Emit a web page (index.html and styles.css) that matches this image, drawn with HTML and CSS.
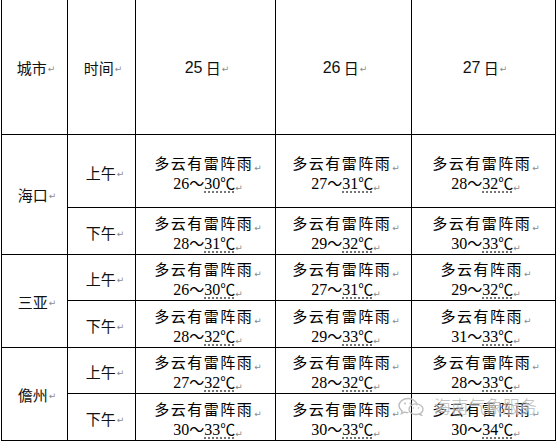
FILE: index.html
```html
<!DOCTYPE html>
<html lang="zh">
<head>
<meta charset="utf-8">
<title>天气预报</title>
<link rel="stylesheet" href="styles.css">
</head>
<body>
<div class="page">
  <div class="sheet">
    <div class="cell head">城市<span class="pm">↵</span></div>
    <div class="cell head">时间<span class="pm">↵</span></div>
    <div class="cell head"><span class="num">25</span>&nbsp;日<span class="pm">↵</span></div>
    <div class="cell head"><span class="num">26</span>&nbsp;日<span class="pm">↵</span></div>
    <div class="cell head"><span class="num">27</span>&nbsp;日<span class="pm">↵</span></div>

    <div class="cell city">海口<span class="pm">↵</span></div>
    <div class="cell time">上午<span class="pm">↵</span></div>
    <div class="cell data"><p class="w">多云有雷阵雨<span class="pm">↵</span></p><p class="t">26<span class="cj">～</span><span class="u">30<span class="cj">℃</span></span><span class="pm">↵</span></p></div>
    <div class="cell data"><p class="w">多云有雷阵雨<span class="pm">↵</span></p><p class="t">27<span class="cj">～</span><span class="u">31<span class="cj">℃</span></span><span class="pm">↵</span></p></div>
    <div class="cell data"><p class="w">多云有雷阵雨<span class="pm">↵</span></p><p class="t">28<span class="cj">～</span><span class="u">32<span class="cj">℃</span></span><span class="pm">↵</span></p></div>
    <div class="cell time">下午<span class="pm">↵</span></div>
    <div class="cell data"><p class="w">多云有雷阵雨<span class="pm">↵</span></p><p class="t">28<span class="cj">～</span><span class="u">31<span class="cj">℃</span></span><span class="pm">↵</span></p></div>
    <div class="cell data"><p class="w">多云有雷阵雨<span class="pm">↵</span></p><p class="t">29<span class="cj">～</span><span class="u">32<span class="cj">℃</span></span><span class="pm">↵</span></p></div>
    <div class="cell data"><p class="w">多云有雷阵雨<span class="pm">↵</span></p><p class="t">30<span class="cj">～</span><span class="u">33<span class="cj">℃</span></span><span class="pm">↵</span></p></div>

    <div class="cell city">三亚<span class="pm">↵</span></div>
    <div class="cell time">上午<span class="pm">↵</span></div>
    <div class="cell data"><p class="w">多云有雷阵雨<span class="pm">↵</span></p><p class="t">26<span class="cj">～</span><span class="u">30<span class="cj">℃</span></span><span class="pm">↵</span></p></div>
    <div class="cell data"><p class="w">多云有雷阵雨<span class="pm">↵</span></p><p class="t">27<span class="cj">～</span><span class="u">31<span class="cj">℃</span></span><span class="pm">↵</span></p></div>
    <div class="cell data"><p class="w">多云有阵雨<span class="pm">↵</span></p><p class="t">29<span class="cj">～</span><span class="u">32<span class="cj">℃</span></span><span class="pm">↵</span></p></div>
    <div class="cell time">下午<span class="pm">↵</span></div>
    <div class="cell data"><p class="w">多云有雷阵雨<span class="pm">↵</span></p><p class="t">28<span class="cj">～</span><span class="u">32<span class="cj">℃</span></span><span class="pm">↵</span></p></div>
    <div class="cell data"><p class="w">多云有雷阵雨<span class="pm">↵</span></p><p class="t">29<span class="cj">～</span><span class="u">33<span class="cj">℃</span></span><span class="pm">↵</span></p></div>
    <div class="cell data"><p class="w">多云有阵雨<span class="pm">↵</span></p><p class="t">31<span class="cj">～</span><span class="u">33<span class="cj">℃</span></span><span class="pm">↵</span></p></div>

    <div class="cell city">儋州<span class="pm">↵</span></div>
    <div class="cell time">上午<span class="pm">↵</span></div>
    <div class="cell data"><p class="w">多云有雷阵雨<span class="pm">↵</span></p><p class="t">27<span class="cj">～</span><span class="u">32<span class="cj">℃</span></span><span class="pm">↵</span></p></div>
    <div class="cell data"><p class="w">多云有雷阵雨<span class="pm">↵</span></p><p class="t">28<span class="cj">～</span><span class="u">32<span class="cj">℃</span></span><span class="pm">↵</span></p></div>
    <div class="cell data"><p class="w">多云有雷阵雨<span class="pm">↵</span></p><p class="t">28<span class="cj">～</span><span class="u">33<span class="cj">℃</span></span><span class="pm">↵</span></p></div>
    <div class="cell time">下午<span class="pm">↵</span></div>
    <div class="cell data"><p class="w">多云有雷阵雨<span class="pm">↵</span></p><p class="t">30<span class="cj">～</span><span class="u">33<span class="cj">℃</span></span><span class="pm">↵</span></p></div>
    <div class="cell data"><p class="w">多云有雷阵雨<span class="pm">↵</span></p><p class="t">30<span class="cj">～</span><span class="u">33<span class="cj">℃</span></span><span class="pm">↵</span></p></div>
    <div class="cell data"><p class="w">多云有雷阵雨<span class="pm">↵</span></p><p class="t">30<span class="cj">～</span><span class="u">34<span class="cj">℃</span></span><span class="pm">↵</span></p></div>
  </div>

  <div class="watermark">
    <svg class="wm-icon" width="28" height="20" viewBox="0 0 28 20" aria-hidden="true">
      <path d="M11 2.5c-5 0-9 3.2-9 7.1 0 2.2 1.2 4.1 3.2 5.4l-0.8 2.6 3-1.5c1.1 0.3 2.3 0.5 3.6 0.5" fill="none" stroke="#b8b8b8" stroke-width="1.4" stroke-linecap="round"/>
      <path d="M11 2.5c4.6 0 8.4 2.7 8.9 6.2" fill="none" stroke="#b8b8b8" stroke-width="1.4" stroke-linecap="round"/>
      <ellipse cx="19" cy="13.2" rx="7" ry="5.3" fill="none" stroke="#b8b8b8" stroke-width="1.4"/>
      <path d="M23.5 17.5l1.3 2-2.8-1.2" fill="none" stroke="#b8b8b8" stroke-width="1.2"/>
      <circle cx="8" cy="7.5" r="1" fill="#b8b8b8"/>
      <circle cx="13.5" cy="7.5" r="1" fill="#b8b8b8"/>
      <circle cx="16.5" cy="12" r="0.8" fill="#b8b8b8"/>
      <circle cx="21.5" cy="12" r="0.8" fill="#b8b8b8"/>
    </svg>
    <span class="wm-text">海南气象服务</span>
  </div>
</div>
</body>
</html>
```

FILE: styles.css
```css
html, body {
  margin: 0;
  padding: 0;
  background: #ffffff;
}

.page {
  position: relative;
  width: 558px;
  height: 441px;
  overflow: hidden;
  background: #ffffff;
}

.sheet {
  margin-left: 1px;
  width: 553px;
  display: grid;
  grid-template-columns: 65px 67px 139px 135px 143px;
  grid-template-rows: 134px 72px 46px 45px 46px 45px 46px;
  gap: 1px;
  padding: 0 1px 1px 1px;
  background: #000000;
}

.cell {
  background: #ffffff;
  display: flex;
  flex-direction: column;
  align-items: center;
  justify-content: center;
  color: #111111;
  font-family: "Noto Sans CJK SC", "Liberation Sans", sans-serif;
  font-size: 15px;
  line-height: 21px;
  text-align: center;
  white-space: nowrap;
}

.head {
  flex-direction: row;
  padding-top: 0;
  padding-left: 3px;
}

.head .num {
  font-family: "Liberation Sans", sans-serif;
  font-size: 16px;
}

.city {
  grid-row: span 2;
  flex-direction: row;
  padding-left: 5px;
  padding-top: 0;
}

.time {
  flex-direction: row;
  padding-left: 7px;
  padding-top: 2px;
}

.data {
  padding-left: 5px;
  padding-top: 3px;
}

.data p {
  margin: 0;
  height: 21px;
  line-height: 21px;
}

.w {
  font-size: 15px;
  letter-spacing: 1.5px;
  font-weight: 400;
  color: #000000;
}

.t {
  font-family: "Liberation Serif", serif;
  font-size: 16px;
  color: #000000;
}

.cj {
  font-family: "Noto Sans CJK SC", sans-serif;
  font-size: 15px;
  line-height: 1;
}

.t .cj:last-child {
  letter-spacing: -1px;
}

.u {
  text-decoration: underline dotted #555555;
  text-underline-offset: 3px;
}

.pm {
  font-family: "DejaVu Sans", sans-serif;
  font-size: 9px;
  line-height: 1;
  color: #8a8a8a;
  letter-spacing: 0;
  font-weight: 400;
  margin-left: 1px;
  position: relative;
  top: 2px;
  text-decoration: none;
}

.watermark {
  position: absolute;
  left: 397px;
  top: 396px;
  display: flex;
  align-items: center;
  gap: 9px;
  opacity: 0.9;
}

.wm-text {
  font-family: "Noto Sans CJK SC", sans-serif;
  font-size: 17px;
  font-weight: 300;
  letter-spacing: 0.2px;
  color: #b4b4b4;
  line-height: 20px;
  text-shadow: 0 0 2px #ffffff, 0 0 2px #ffffff;
}
```
